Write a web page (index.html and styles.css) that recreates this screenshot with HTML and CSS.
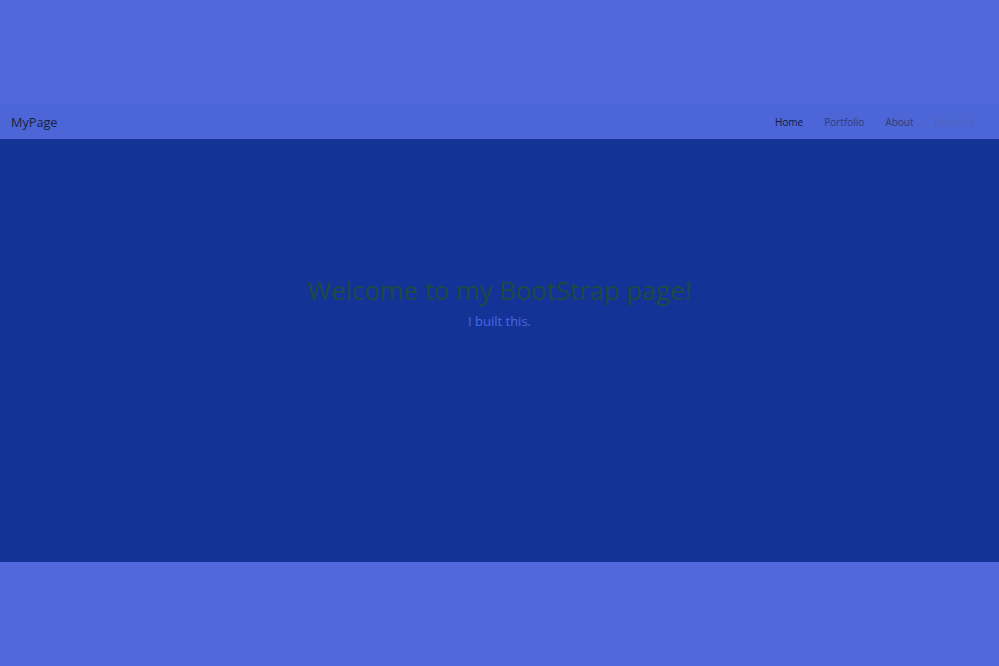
FILE: index.html
```html
<!DOCTYPE html>
<html>
<head>
<meta charset="utf-8">
<link rel="stylesheet" href="styles.css">
</head>
<body>
<div class="spacer"></div>
<nav class="navbar">
  <span class="brand">MyPage</span>
  <ul class="nav">
    <li class="active">Home</li>
    <li>Portfolio</li>
    <li>About</li>
    <li class="disabled">Disabled</li>
  </ul>
</nav>
<section class="hero">
  <h1>Welcome to my BootStrap page!</h1>
  <p>I built this.</p>
</section>
</body>
</html>
```
FILE: styles.css
```css
html, body {
  margin: 0;
  padding: 0;
  background: #5068da;
  font-family: "Open Sans", "Noto Sans", sans-serif;
  height: 666px;
  overflow: hidden;
}
.spacer {
  height: 104px;
}
.navbar {
  height: 35px;
  background: #4d66d7;
  display: flex;
  align-items: center;
  justify-content: space-between;
  padding: 0 11px;
  box-sizing: border-box;
}
.brand {
  font-size: 12.7px;
  color: #1a1f3a;
}
.nav {
  list-style: none;
  margin: 0;
  padding: 0 13px 0 0;
  display: flex;
  gap: 21px;
  font-size: 10px;
}
.nav li { color: #2f3a78; }
.nav li.active { color: #121a44; }
.nav li.disabled { color: #5062bb; }
.hero {
  height: 423px;
  background: #143396;
  display: flex;
  flex-direction: column;
  align-items: center;
  padding-top: 135px;
  box-sizing: border-box;
}
.hero h1 {
  margin: 0;
  font-weight: 400;
  font-size: 25.7px;
  color: #1e4a42;
  line-height: 34px;
}
.hero p {
  margin: 0;
  margin-top: 4px;
  font-size: 13px;
  color: #4a68e0;
}
```
